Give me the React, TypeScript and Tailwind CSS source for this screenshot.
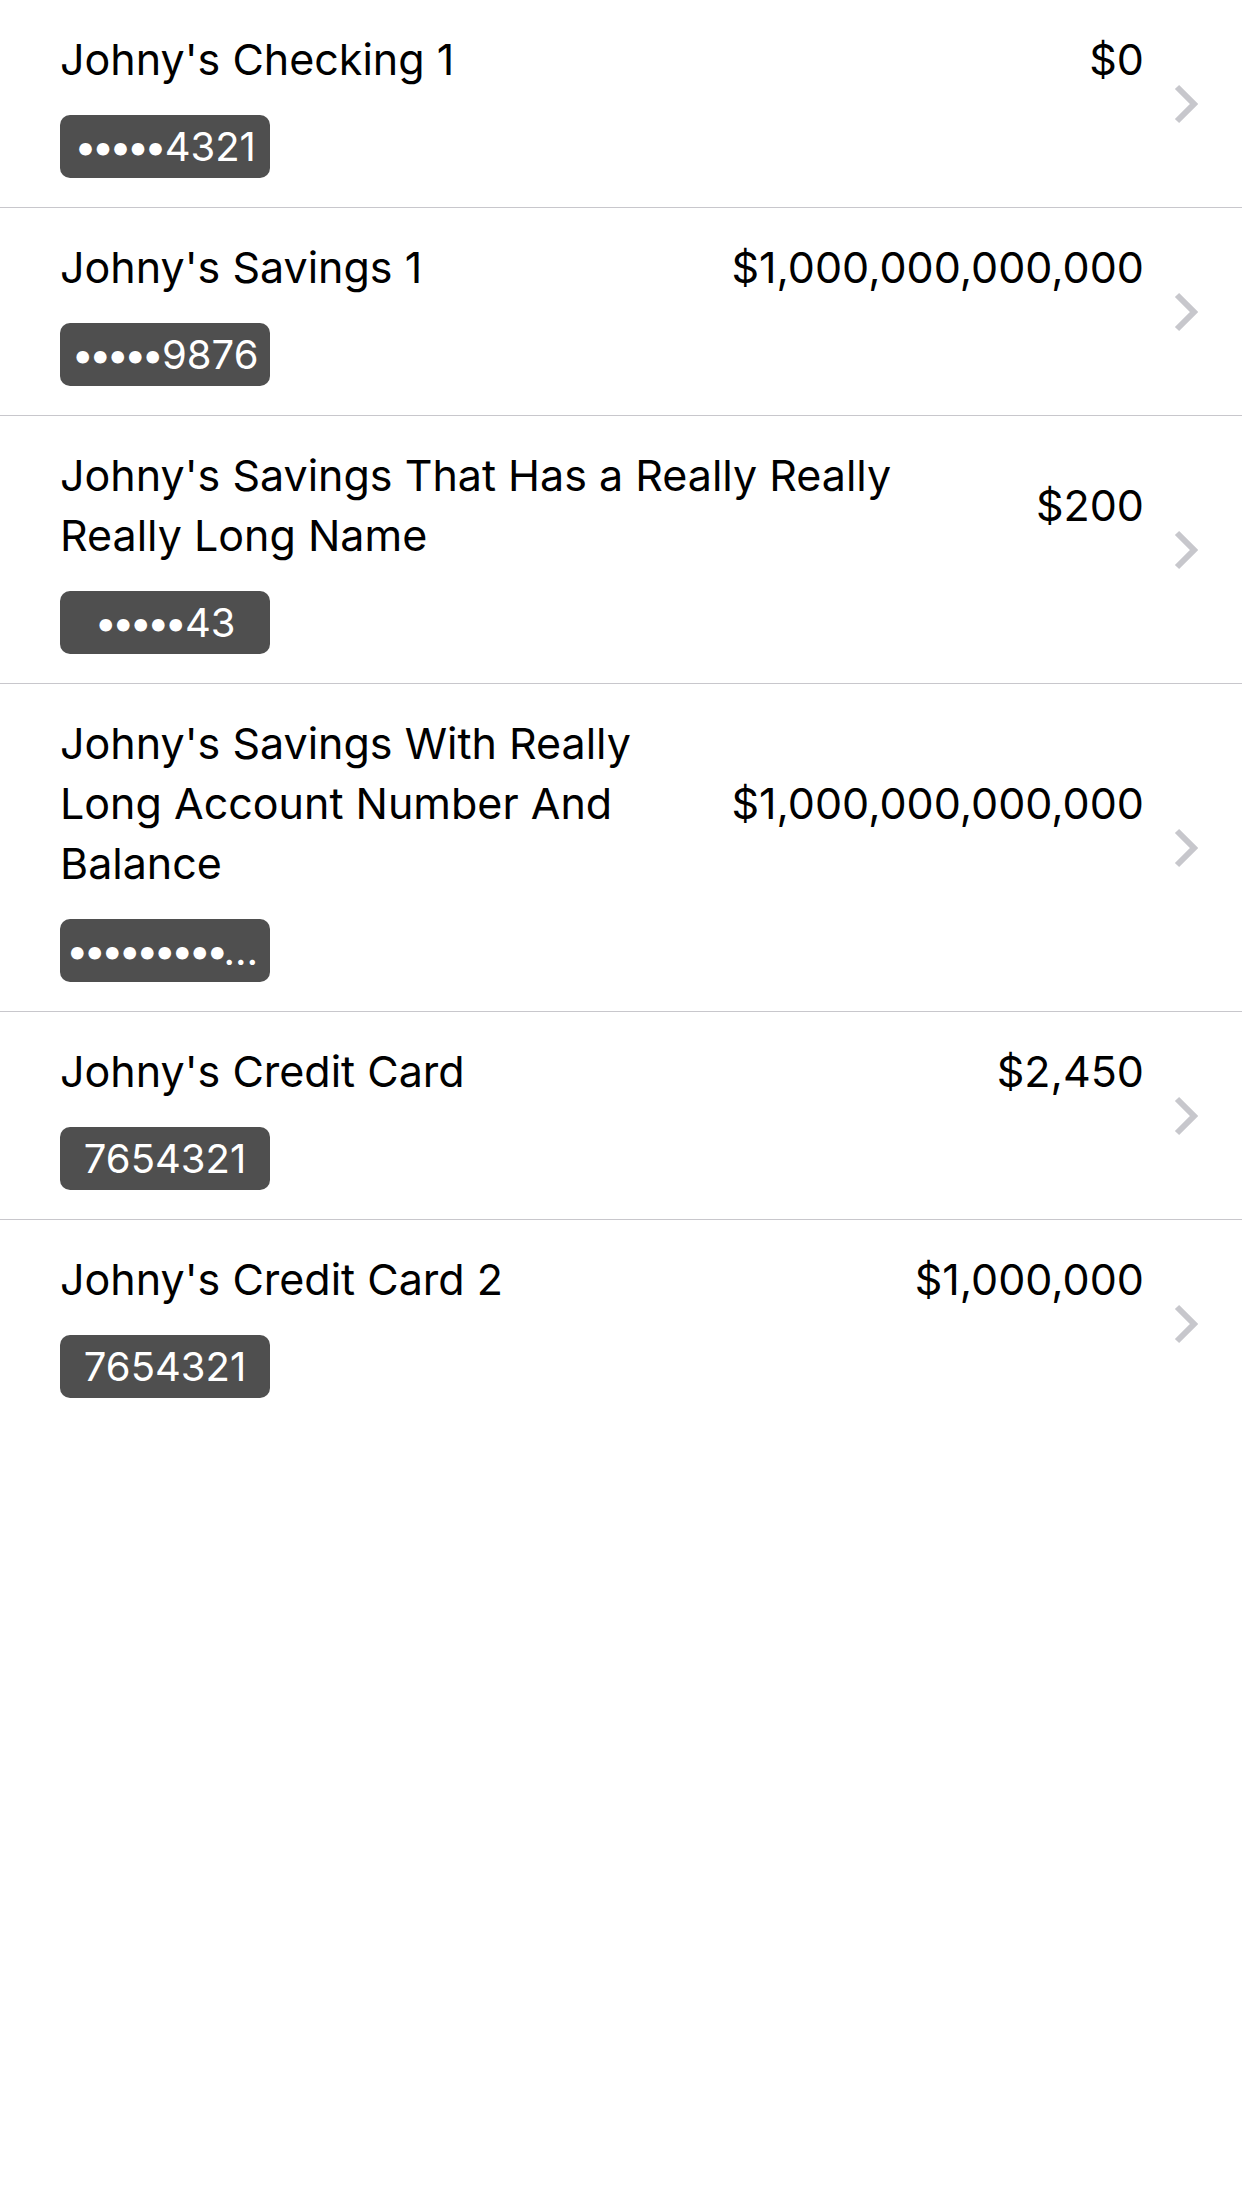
import React from "react";

type Account = {
  name: string;
  balance: string;
  number: string;
};

const accounts: Account[] = [
  { name: "Johny's Checking 1", balance: "$0", number: "•••••4321" },
  { name: "Johny's Savings 1", balance: "$1,000,000,000,000", number: "•••••9876" },
  {
    name: "Johny's Savings That Has a Really Really Really Long Name",
    balance: "$200",
    number: "•••••43",
  },
  {
    name: "Johny's Savings With Really Long Account Number And Balance",
    balance: "$1,000,000,000,000",
    number: "••••••••••••••••••••",
  },
  { name: "Johny's Credit Card", balance: "$2,450", number: "7654321" },
  { name: "Johny's Credit Card 2", balance: "$1,000,000", number: "7654321" },
];

function Chevron() {
  return (
    <svg width="24" height="40" viewBox="0 0 24 40" className="shrink-0">
      <polyline
        points="3,3 20,20 3,37"
        fill="none"
        stroke="#c7c7cc"
        strokeWidth="6"
        strokeLinecap="butt"
        strokeLinejoin="miter"
      />
    </svg>
  );
}

// masked numbers: bullets are set tighter than the digits
function MaskedNumber({ value }: { value: string }) {
  const dots = value.match(/^•*/)?.[0] ?? "";
  const rest = value.slice(dots.length);
  return (
    <span className="block truncate text-[40px] leading-[63px] text-white">
      {dots && <span className="tracking-[-5px] pr-[3px]">{dots}</span>}
      {rest}
    </span>
  );
}

function AccountRow({ account, last }: { account: Account; last: boolean }) {
  return (
    <div className={last ? "" : "border-b border-[#c8c7cc]"}>
      <div className="flex items-center pl-[60px] pr-[44px]">
        <div className="flex-1 min-w-0 pt-[29px] pb-[29px]">
          {/* name + balance */}
          <div className="flex items-center">
            <div className="flex-1 min-w-0 text-[43px] leading-[60px] text-black">
              {account.name}
            </div>
            <div className="shrink-0 ml-[44px] text-[43px] leading-[60px] text-black">
              {account.balance}
            </div>
          </div>
          <div className="mt-[26px] w-[210px] h-[63px] rounded-[10px] bg-[#4f4f4f] px-[6px] flex items-center justify-center">
            <MaskedNumber value={account.number} />
          </div>
        </div>
        <div className="ml-[30px]">
          <Chevron />
        </div>
      </div>
    </div>
  );
}

export default function App() {
  return (
    <div
      className="min-h-screen w-full bg-white"
      style={{ fontFamily: "Inter, 'Liberation Sans', sans-serif" }}
    >
      {accounts.map((a, i) => (
        <AccountRow key={i} account={a} last={i === accounts.length - 1} />
      ))}
    </div>
  );
}
